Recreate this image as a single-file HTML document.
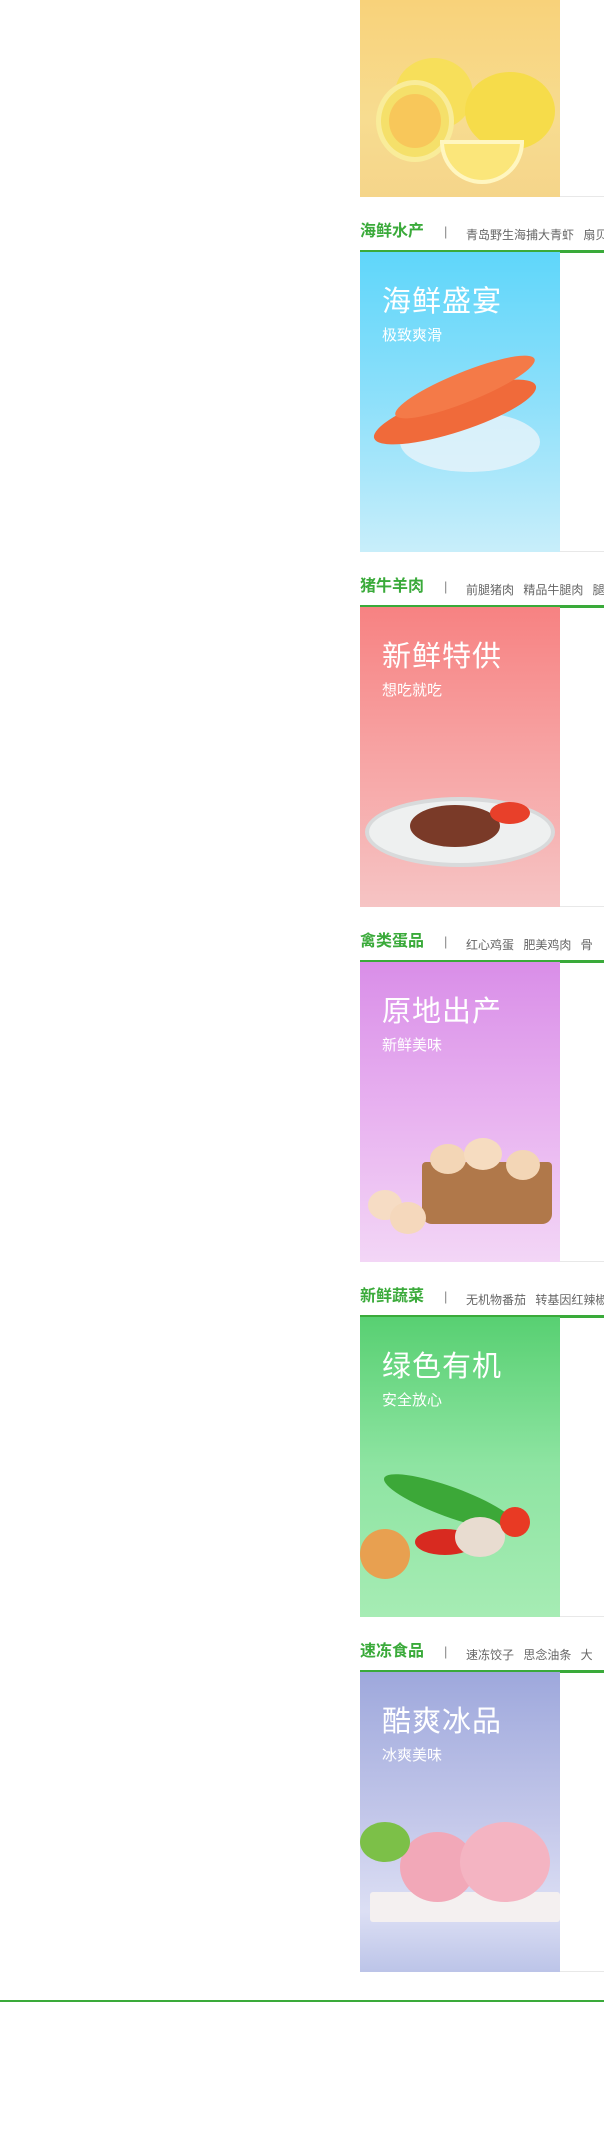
<!DOCTYPE html>
<html><head><meta charset="utf-8"><style>
*{margin:0;padding:0;box-sizing:border-box}
body{width:604px;height:2130px;background:#fff;position:relative;overflow:hidden;font-family:"Liberation Sans","Noto Sans CJK SC",sans-serif}
.a{position:absolute}
.ttl{position:absolute;left:360px;font-size:16px;font-weight:bold;color:#3aaa3a;white-space:nowrap}
.sep{position:absolute;left:444px;font-size:13px;color:#888}
.lk{position:absolute;left:466px;font-size:12px;color:#666;white-space:nowrap;word-spacing:6px}
.gl{position:absolute;left:360px;width:244px;height:3px;background:#3aaa3a}
.bn{position:absolute;left:360px;width:200px;height:300px;overflow:hidden}
.bn h2{position:absolute;left:22px;top:26px;font-size:29px;font-weight:normal;color:#fff;letter-spacing:1px}
.bn p{position:absolute;left:22px;top:72px;font-size:15px;color:#fff}
.bd{position:absolute;left:560px;width:44px;height:1px;background:#e8e8e8}
</style></head><body>

<div class="bn" style="top:0;height:197px;background:linear-gradient(#f8d27a,#f7dc90 60%,#f5d58a)">
<div class="a" style="left:35px;top:58px;width:78px;height:72px;border-radius:50%;background:#f7df5a"></div>
<div class="a" style="left:105px;top:72px;width:90px;height:78px;border-radius:50%;background:#f6dc4a"></div>
<div class="a" style="left:16px;top:80px;width:78px;height:82px;border-radius:50%;background:#f5e06a;border:5px solid #f9ec9a"></div>
<div class="a" style="left:29px;top:94px;width:52px;height:54px;border-radius:50%;background:#f8c75a"></div>
<div class="a" style="left:80px;top:140px;width:84px;height:44px;border-radius:0 0 42px 42px;background:#fbe67a;border:4px solid #fff6c0"></div>
</div>
<div class="bd" style="top:196px"></div>

<div class="ttl" style="top:217px">海鲜水产</div><div class="sep" style="top:224px">|</div><div class="lk" style="top:226px">青岛野生海捕大青虾 扇贝</div>
<div class="gl" style="top:250px"></div>
<div class="bn" style="top:252px;background:linear-gradient(#5fd6fa,#8ee0fa 50%,#c8eefa)">
<h2>海鲜盛宴</h2><p>极致爽滑</p>
<div class="a" style="left:40px;top:160px;width:140px;height:60px;border-radius:50%;background:#e8f4fa;opacity:.8"></div>
<div class="a" style="left:10px;top:140px;width:170px;height:40px;border-radius:50%;background:#f06a3a;transform:rotate(-18deg)"></div>
<div class="a" style="left:30px;top:120px;width:150px;height:30px;border-radius:50%;background:#f47a48;transform:rotate(-22deg)"></div>
</div>
<div class="bd" style="top:551px"></div>

<div class="ttl" style="top:572px">猪牛羊肉</div><div class="sep" style="top:579px">|</div><div class="lk" style="top:581px">前腿猪肉 精品牛腿肉 腿</div>
<div class="gl" style="top:605px"></div>
<div class="bn" style="top:607px;background:linear-gradient(#f78282,#f7a4a4 50%,#f6c4c4)">
<h2>新鲜特供</h2><p>想吃就吃</p>
<div class="a" style="left:5px;top:190px;width:190px;height:70px;border-radius:50%;background:#eef0f0;border:4px solid #d8dadb"></div>
<div class="a" style="left:50px;top:198px;width:90px;height:42px;border-radius:50%;background:#7a3a28"></div>
<div class="a" style="left:130px;top:195px;width:40px;height:22px;border-radius:50%;background:#e8402a"></div>
</div>
<div class="bd" style="top:906px"></div>

<div class="ttl" style="top:927px">禽类蛋品</div><div class="sep" style="top:934px">|</div><div class="lk" style="top:936px">红心鸡蛋 肥美鸡肉 骨</div>
<div class="gl" style="top:960px"></div>
<div class="bn" style="top:962px;background:linear-gradient(#d98ee8,#e8b2f0 50%,#f3d6f6)">
<h2>原地出产</h2><p>新鲜美味</p>
<div class="a" style="left:62px;top:200px;width:130px;height:62px;background:#b0784a;border-radius:4px 4px 10px 10px"></div>
<div class="a" style="left:70px;top:182px;width:36px;height:30px;border-radius:50%;background:#f3d6b6"></div>
<div class="a" style="left:104px;top:176px;width:38px;height:32px;border-radius:50%;background:#f6dcc0"></div>
<div class="a" style="left:146px;top:188px;width:34px;height:30px;border-radius:50%;background:#f3d6b6"></div>
<div class="a" style="left:8px;top:228px;width:34px;height:30px;border-radius:50%;background:#f6dcc4"></div>
<div class="a" style="left:30px;top:240px;width:36px;height:32px;border-radius:50%;background:#f5d8bc"></div>
</div>
<div class="bd" style="top:1261px"></div>

<div class="ttl" style="top:1282px">新鲜蔬菜</div><div class="sep" style="top:1289px">|</div><div class="lk" style="top:1291px">无机物番茄 转基因红辣椒</div>
<div class="gl" style="top:1315px"></div>
<div class="bn" style="top:1317px;background:linear-gradient(#58d072,#8ee4a2 50%,#a6ecb4)">
<h2>绿色有机</h2><p>安全放心</p>
<div class="a" style="left:20px;top:170px;width:140px;height:30px;border-radius:50%;background:#3ca838;transform:rotate(20deg)"></div>
<div class="a" style="left:0;top:212px;width:50px;height:50px;border-radius:50%;background:#e8a050"></div>
<div class="a" style="left:55px;top:212px;width:60px;height:26px;border-radius:50%;background:#d82a20"></div>
<div class="a" style="left:95px;top:200px;width:50px;height:40px;border-radius:50%;background:#e8dcd0"></div>
<div class="a" style="left:140px;top:190px;width:30px;height:30px;border-radius:50%;background:#e83a24"></div>
</div>
<div class="bd" style="top:1616px"></div>

<div class="ttl" style="top:1637px">速冻食品</div><div class="sep" style="top:1644px">|</div><div class="lk" style="top:1646px">速冻饺子 思念油条 大</div>
<div class="gl" style="top:1670px"></div>
<div class="bn" style="top:1672px;background:linear-gradient(#9ea8dc,#c4c8ea 50%,#dcdff4 80%,#bcc4e8)">
<h2>酷爽冰品</h2><p>冰爽美味</p>
<div class="a" style="left:10px;top:220px;width:190px;height:30px;background:#f4f0f0;border-radius:3px"></div>
<div class="a" style="left:40px;top:160px;width:75px;height:70px;border-radius:50%;background:#f2a8b8"></div>
<div class="a" style="left:100px;top:150px;width:90px;height:80px;border-radius:50%;background:#f4b4c2"></div>
<div class="a" style="left:0;top:150px;width:50px;height:40px;border-radius:50%;background:#7cc048"></div>
</div>
<div class="bd" style="top:1971px"></div>

<div class="a" style="left:0;top:2000px;width:604px;height:2px;background:#3aaa3a"></div>
</body></html>
